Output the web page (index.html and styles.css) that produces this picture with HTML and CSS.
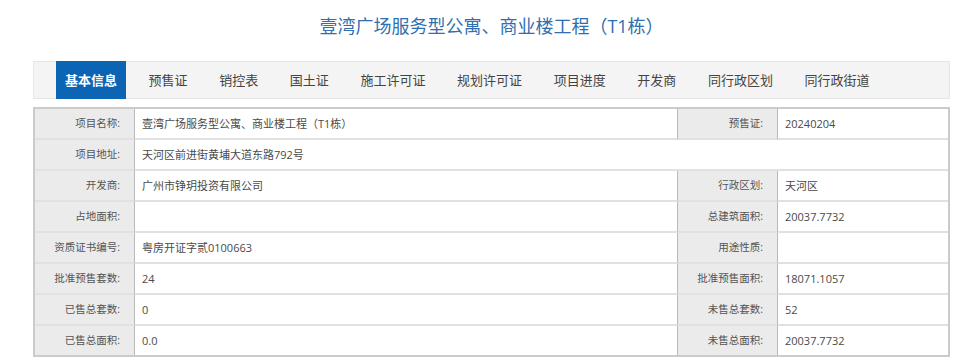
FILE: index.html
```html
<!DOCTYPE html>
<html>

<head>
    <meta charset="utf-8">
    <meta name="viewport" content="width=device-width">
    <title>项目信息</title>
    <link rel="stylesheet" href="styles.css">
</head>

<body>
    <div class="wrap">
        <h1 class="title">壹湾广场服务型公寓、商业楼工程（T1栋）</h1>
        <div class="tabs">
            <a href="#" class="on">基本信息</a>
            <a href="#">预售证</a>
            <a href="#">销控表</a>
            <a href="#">国土证</a>
            <a href="#">施工许可证</a>
            <a href="#">规划许可证</a>
            <a href="#">项目进度</a>
            <a href="#">开发商</a>
            <a href="#">同行政区划</a>
            <a href="#">同行政街道</a>
        </div>
        <table class="info">
            <tr>
                <td class="lab">项目名称:</td>
                <td class="val">壹湾广场服务型公寓、商业楼工程（T1栋）</td>
                <td class="lab">预售证:</td>
                <td class="val last">20240204</td>
            </tr>
            <tr>
                <td class="lab">项目地址:</td>
                <td class="val last" colspan="3">天河区前进街黄埔大道东路792号</td>
            </tr>
            <tr>
                <td class="lab">开发商:</td>
                <td class="val">广州市铮玥投资有限公司</td>
                <td class="lab">行政区划:</td>
                <td class="val last">天河区</td>
            </tr>
            <tr>
                <td class="lab">占地面积:</td>
                <td class="val"></td>
                <td class="lab">总建筑面积:</td>
                <td class="val last">20037.7732</td>
            </tr>
            <tr>
                <td class="lab">资质证书编号:</td>
                <td class="val">粤房开证字贰0100663</td>
                <td class="lab">用途性质:</td>
                <td class="val last"></td>
            </tr>
            <tr>
                <td class="lab">批准预售套数:</td>
                <td class="val">24</td>
                <td class="lab">批准预售面积:</td>
                <td class="val last">18071.1057</td>
            </tr>
            <tr>
                <td class="lab">已售总套数:</td>
                <td class="val">0</td>
                <td class="lab">未售总套数:</td>
                <td class="val last">52</td>
            </tr>
            <tr>
                <td class="lab">已售总面积:</td>
                <td class="val">0.0</td>
                <td class="lab">未售总面积:</td>
                <td class="val last">20037.7732</td>
            </tr>
        </table>
    </div>
</body>

</html>
```

FILE: styles.css
```css
body {
    margin: 0;
    background: #fff;
    font-family: "Open Sans", "Noto Sans CJK SC", sans-serif;
}

.wrap {
    width: 917px;
    margin-left: 33px;
}

.title {
    margin: 0;
    height: 52px;
    line-height: 52px;
    text-align: center;
    font-size: 18px;
    font-weight: normal;
    color: #2f6fb0;
}

.tabs {
    display: flex;
    gap: 13.6px;
    height: 36px;
    margin-top: 9px;
    padding-left: 22px;
    background: #f4f4f4;
    border: 1px solid #e6e6e6;
}

.tabs a {
    display: block;
    padding: 0 9px;
    line-height: 36px;
    font-size: 13px;
    color: #444;
    text-decoration: none;
}

.tabs a.on {
    margin: -1px 0;
    line-height: 38px;
    background: #0b64b4;
    color: #fff;
    font-weight: bold;
}

.info {
    width: 917px;
    margin-top: 8px;
    table-layout: fixed;
    border-collapse: separate;
    border-spacing: 0;
    border: 2px solid #cbcbcb;
}

.info td {
    box-sizing: border-box;
    height: 31px;
    padding: 0;
    line-height: 29px;
    border-bottom: 2px solid #e1e1e1;
    border-right: 1px solid #b9b9b9;
    white-space: nowrap;
}

.info tr:last-child td {
    height: 29px;
    border-bottom: 0;
}

.info .lab {
    width: 100px;
    padding-right: 14px;
    text-align: right;
    background: #ebebeb;
    font-size: 10.5px;
    color: #555;
}

.info .val {
    padding-left: 7px;
    font-size: 11px;
    color: #4a4a4a;
}

.info td:nth-child(2) {
    width: 543px;
}

.info .last {
    border-right: 0;
}
```
